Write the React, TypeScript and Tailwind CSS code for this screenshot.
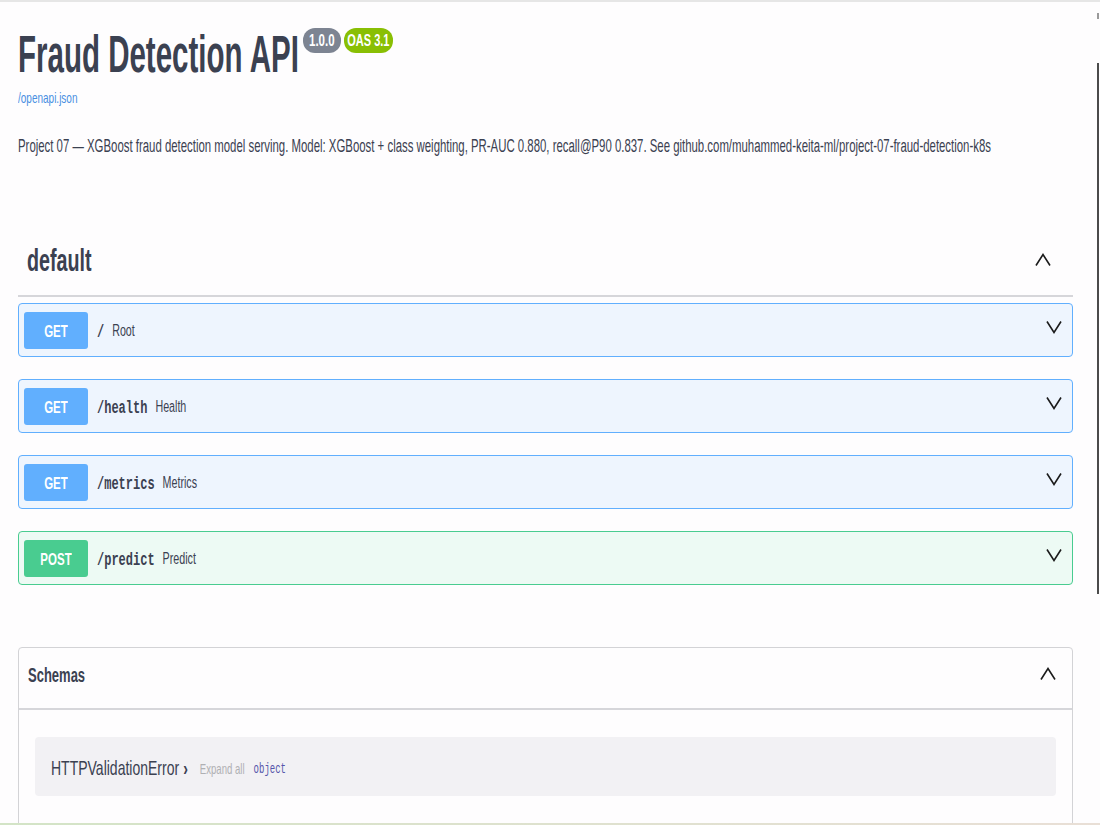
import { ReactNode } from "react";

const sans = "font-['Liberation_Sans',Arial,sans-serif]";
const mono = "font-['Liberation_Mono','DejaVu_Sans_Mono',monospace]";

// the screenshot's type is tall and narrow: smaller size, stretched vertically
function Tall({ children, className = "scale-y-[1.5]" }: { children: ReactNode; className?: string }) {
  return <span className={`inline-block ${className}`}>{children}</span>;
}

function ChevronDown() {
  return (
    <svg width="16" height="14" viewBox="0 0 16 14" fill="none">
      <polyline points="1,1.5 8,12.5 15,1.5" stroke="#1b1b1b" strokeWidth="1.6" />
    </svg>
  );
}

function ChevronUp() {
  return (
    <svg width="16" height="14" viewBox="0 0 16 14" fill="none">
      <polyline points="1,12.5 8,1.5 15,12.5" stroke="#1b1b1b" strokeWidth="1.6" />
    </svg>
  );
}

const ops = [
  { method: "GET", path: "/", summary: "Root" },
  { method: "GET", path: "/health", summary: "Health" },
  { method: "GET", path: "/metrics", summary: "Metrics" },
  { method: "POST", path: "/predict", summary: "Predict" },
];

function Operation({ method, path, summary }: { method: string; path: string; summary: string }) {
  const post = method === "POST";
  return (
    <div
      className={`flex h-[54px] items-center rounded-[4px] border pl-[5px] pr-[10px] ${
        post ? "border-[#49cc90] bg-[#edfaf4]" : "border-[#61affe] bg-[#eef5fe]"
      }`}
    >
      <div
        className={`flex h-[37px] w-[64px] items-center justify-center rounded-[3px] pt-[3px] text-[11.5px] font-bold text-white ${
          post ? "bg-[#49cc90]" : "bg-[#61affe]"
        }`}
      >
        <Tall className="scale-y-[1.45]">{method}</Tall>
      </div>
      <span className={`ml-[9px] mt-[3px] text-[12px] font-bold text-[#3b4151] ${mono}`}>
        <Tall className="scale-y-[1.5]">{path}</Tall>
      </span>
      <span className="ml-[8px] text-[10.7px] text-[#3b4151]">
        <Tall>{summary}</Tall>
      </span>
      <div className="ml-auto -mt-[6px]">
        <ChevronDown />
      </div>
    </div>
  );
}

export default function App() {
  return (
    <div className={`relative h-[825px] w-[1100px] overflow-hidden border-t-2 border-[#e6e6e6] bg-[#fefdfe] ${sans}`}>
      <div className="pl-[18px] pr-[27px]">
        {/* info */}
        <div className="mt-[20px] flex h-[64px] items-start">
          <h1 className="flex h-[64px] items-center text-[29.5px] font-bold leading-none text-[#3b4151]">
            <Tall className="scale-y-[1.77]">Fraud Detection API</Tall>
          </h1>
          <span className="ml-[4px] mt-[6px] flex h-[25px] w-[38px] items-center justify-center rounded-[12px] bg-[#7d8492] text-[11.5px] font-bold text-white">
            <Tall>1.0.0</Tall>
          </span>
          <span className="ml-[3px] mt-[6px] flex h-[25px] w-[49px] items-center justify-center rounded-[12px] bg-[#89bf04] text-[11px] font-bold text-white">
            <Tall>OAS 3.1</Tall>
          </span>
        </div>
        <div className="mt-[1px] flex h-[20px] items-center text-[10px] text-[#4990e2]">
          <Tall>/openapi.json</Tall>
        </div>
        <div className="mt-[30px] flex h-[20px] items-center whitespace-nowrap text-[11.4px] text-[#3b4151]">
          <Tall className="scale-y-[1.6]">
            Project 07 — XGBoost fraud detection model serving. Model: XGBoost + class weighting, PR-AUC 0.880,
            recall@P90 0.837. See github.com/muhammed-keita-ml/project-07-fraud-detection-k8s
          </Tall>
        </div>

        {/* default tag */}
        <div className="mt-[81px] border-b-2 border-[#d6d6da] pb-[13px]">
          <div className="flex h-[44px] items-center pl-[9px] pr-[22px]">
            <h3 className="mt-[4px] text-[19.7px] font-bold text-[#3b4151]">
              <Tall className="scale-y-[1.55]">default</Tall>
            </h3>
            <div className="ml-auto">
              <ChevronUp />
            </div>
          </div>
        </div>
        <div className="mt-[6px] flex flex-col gap-[22px]">
          {ops.map((op) => (
            <Operation key={op.path} {...op} />
          ))}
        </div>

        {/* schemas */}
        <section className="mt-[62px] h-[300px] rounded-[4px] border border-[#d3d3d6]">
          <div className="flex h-[62px] items-center border-b-2 border-[#d6d6da] pb-[8px] pl-[9px] pr-[16px]">
            <h4 className="mt-[3px] text-[13px] font-bold text-[#3b4151]">
              <Tall>Schemas</Tall>
            </h4>
            <div className="ml-auto">
              <ChevronUp />
            </div>
          </div>
          <div className="px-[16px] pt-[27px]">
            <div className="flex h-[59px] items-center rounded-[4px] bg-[#f2f1f4] pl-[16px] pt-[3px]">
              <span className="text-[14px] text-[#3b4151]">
                <Tall>HTTPValidationError</Tall>
              </span>
              <span className="ml-[4px] text-[14px] font-bold text-[#3b4151]">
                <Tall>›</Tall>
              </span>
              <span className="ml-[12px] mt-[4px] text-[9.6px] text-[#b0b0b3]">
                <Tall>Expand all</Tall>
              </span>
              <span className={`ml-[9px] mt-[6px] text-[9px] text-[#55a] ${mono}`}>
                <Tall className="scale-y-[1.7]">object</Tall>
              </span>
            </div>
          </div>
        </section>
      </div>

      {/* scrollbar overlay */}
      <div className="absolute right-[1px] top-[11px] h-[6px] w-[2px] bg-[#9a9a9a]" />
      <div className="absolute right-[1px] top-[61px] h-[531px] w-[2px] bg-[#4b4b4b]" />
      {/* window bottom edge */}
      <div className="absolute bottom-0 left-0 h-[2px] w-full bg-gradient-to-r from-[#d3e4c6] to-[#e9dfd6]" />
    </div>
  );
}
